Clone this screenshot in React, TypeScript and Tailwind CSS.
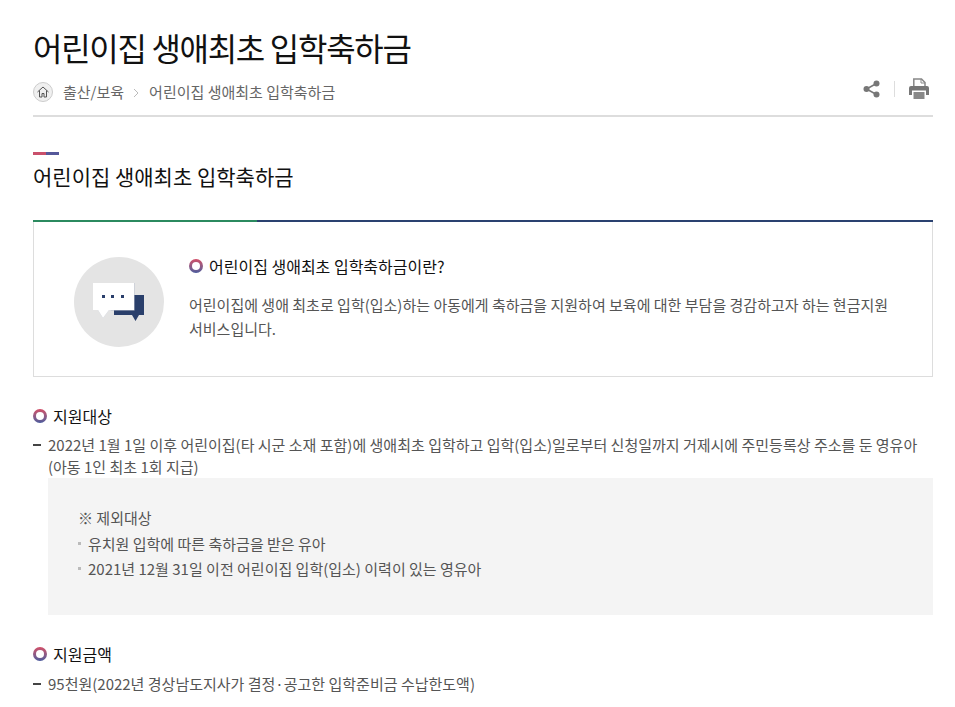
function Ring() {
  return (
    <span className="flex size-[14px] shrink-0 items-center justify-center rounded-full bg-gradient-to-b from-[#d24c66] to-[#4a5a9c]">
      <span className="size-[8px] rounded-full bg-white" />
    </span>
  );
}

function SectionHead({ label }: { label: string }) {
  return (
    <div className="flex items-center gap-[6px] text-[16px] leading-[22px] text-[#111]">
      <Ring />
      <span>{label}</span>
    </div>
  );
}

function Dash({ children }: { children: React.ReactNode }) {
  return (
    <div className="relative pl-[15px] text-[15px] leading-[22px] text-[#555]">
      <span className="absolute left-0 top-[10px] h-[2px] w-[8px] bg-[#444]" />
      {children}
    </div>
  );
}

function Bullet({ children }: { children: React.ReactNode }) {
  return (
    <div className="relative pl-[10px] text-[15px] leading-[25px] text-[#555]">
      <span className="absolute left-0 top-[11px] size-[3px] bg-[#bbb]" />
      {children}
    </div>
  );
}

export default function App() {
  return (
    <div
      className="h-[707px] w-[955px] overflow-hidden bg-white pl-[33px] pr-[22px] pt-[24px]"
      style={{ fontFamily: '"Noto Sans CJK KR", "Noto Sans", sans-serif' }}
    >
      <h1 className="text-[32px] leading-[46px] tracking-[-1.3px] text-[#111]">어린이집 생애최초 입학축하금</h1>

      {/* breadcrumb */}
      <div className="mt-[9px] flex h-[38px] items-start justify-between border-b-2 border-[#ddd]">
        <div className="flex items-center pt-[1px] text-[15px] leading-[24px] text-[#666]">
          <span className="flex size-[20px] items-center justify-center rounded-full border border-[#ccc] bg-[#f0f0f0]">
            <svg width="12" height="12" viewBox="0 0 24 24" fill="none" stroke="#555" strokeWidth="2">
              <path d="M1 12 12 2l11 10M5 9v13h5v-7h4v7h5V9" />
            </svg>
          </span>
          <span className="ml-[10px]">출산/보육</span>
          <svg className="ml-[9px] mr-[10px] mt-[2px]" width="6" height="10" viewBox="0 0 6 10" fill="none" stroke="#bbb">
            <path d="m1 1 4 4-4 4" />
          </svg>
          <span>어린이집 생애최초 입학축하금</span>
        </div>
        <div className="-mt-[1px] mr-[4px] flex items-center">
          <svg width="17" height="18" viewBox="0 0 17 18" fill="#777">
            <circle cx="13.500" cy="3.500" r="3" />
            <circle cx="3.500" cy="9" r="3" />
            <circle cx="13.500" cy="14.500" r="3" />
            <path d="M3.500 9l10-5.500M3.500 9l10 5.500" stroke="#777" strokeWidth="1.500" />
          </svg>
          <span className="ml-[14px] h-[16px] w-px bg-[#ddd]" />
          <svg className="ml-[14px]" width="20" height="21" viewBox="0 0 20 21">
            <path d="M4.800 9V1h7.700L16 4.500V9" fill="none" stroke="#888" strokeWidth="1.500" />
            <path d="M12 1v4h4" fill="none" stroke="#888" />
            <path d="M2 8h16a2 2 0 0 1 2 2v7h-3v-3H3v3H0v-7a2 2 0 0 1 2-2z" fill="#777" />
            <path d="M3 12.500h14v1.500H3z" fill="#fff" />
            <path d="M4.500 14h11v7h-11z" fill="#888" />
          </svg>
        </div>
      </div>

      {/* section title */}
      <div className="mt-[35px] flex h-[3px] w-[26px]">
        <span className="w-[13px] bg-[#c9506b]" />
        <span className="w-[13px] bg-[#55589a]" />
      </div>
      <h2 className="mt-[6px] text-[21px] leading-[30px] text-[#111]">어린이집 생애최초 입학축하금</h2>

      {/* intro box */}
      <div className="mt-[29px] flex h-[157px] border border-t-0 border-[#ddd]">
        <div className="relative w-full">
          <div className="absolute -left-px -right-px top-0 flex h-[2px]">
            <span className="w-[224px] bg-[#2b8a5f]" />
            <span className="flex-1 bg-[#2a4170]" />
          </div>
          <div className="flex pl-[40px] pt-[37px]">
            <div className="flex size-[90px] shrink-0 items-center justify-center rounded-full bg-[#e4e4e4]">
              <svg width="52" height="40" viewBox="0 0 52 40">
                <path d="M21 13h30v20H46l-3.500 6L39 33H21z" fill="#2a3f6b" />
                <path d="M0 1h41.500v27.500H18l-.5-.5H16l-6 8-5-8H0z" fill="#b9c0ce" />
                <path d="M0 1h41v27H16l-6 8-5-8H0z" fill="#fff" />
                <path d="M9 13h3v3H9zM18 13h3v3h-3zM28 13h3v3h-3z" fill="#2a3f6b" />
              </svg>
            </div>
            <div className="ml-[25px] w-[715px]">
              <div className="-mt-[2px]">
                <SectionHead label="어린이집 생애최초 입학축하금이란?" />
              </div>
              <p className="mt-[16px] text-[15px] leading-[24px] text-[#555]">
                어린이집에 생애 최초로 입학(입소)하는 아동에게 축하금을 지원하여 보육에 대한 부담을 경감하고자 하는 현금지원 서비스입니다.
              </p>
            </div>
          </div>
        </div>
      </div>

      <div className="mt-[28px]">
        <SectionHead label="지원대상" />
      </div>
      <div className="mt-[7px]">
        <Dash>
          2022년 1월 1일 이후 어린이집(타 시군 소재 포함)에 생애최초 입학하고 입학(입소)일로부터 신청일까지 거제시에 주민등록상 주소를 둔 영유아 (아동 1인 최초 1회 지급)
        </Dash>
      </div>
      <div className="ml-[15px] h-[137px] bg-[#f4f4f4] pl-[30px] pt-[27px]">
        <p className="text-[15px] leading-[25px] text-[#555]">※ 제외대상</p>
        <div className="mt-[1px]">
          <Bullet>유치원 입학에 따른 축하금을 받은 유아</Bullet>
          <Bullet>2021년 12월 31일 이전 어린이집 입학(입소) 이력이 있는 영유아</Bullet>
        </div>
      </div>

      <div className="mt-[28px]">
        <SectionHead label="지원금액" />
      </div>
      <div className="mt-[8px]">
        <Dash>95천원(2022년 경상남도지사가 결정·공고한 입학준비금 수납한도액)</Dash>
      </div>
    </div>
  );
}
